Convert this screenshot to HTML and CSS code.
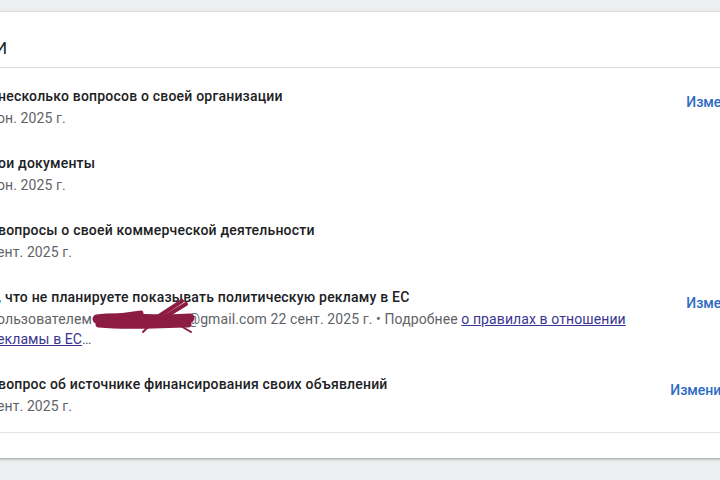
FILE: index.html
```html
<!DOCTYPE html>
<html lang="ru">
<head>
    <meta charset="UTF-8">
    <meta name="viewport" content="width=device-width, initial-scale=1.0">
    <title>Проверки</title>
    <link rel="stylesheet" href="styles.css">
</head>
<body>
    <div class="page">
        <div class="card">
            <div class="card-header"><span class="header-text">И</span></div>

            <div class="list">
                <div class="row">
                    <div class="info">
                        <div class="title">несколько вопросов о своей организации</div>
                        <div class="sub">он. 2025 г.</div>
                    </div>
                    <a href="#" class="action">Изменить</a>
                </div>

                <div class="row">
                    <div class="info">
                        <div class="title">ои документы</div>
                        <div class="sub">он. 2025 г.</div>
                    </div>
                </div>

                <div class="row">
                    <div class="info">
                        <div class="title">вопросы о своей коммерческой деятельности</div>
                        <div class="sub">ент. 2025 г.</div>
                    </div>
                </div>

                <div class="row">
                    <div class="info">
                        <div class="title">, что не планируете показывать политическую рекламу в ЕС</div>
                        <div class="sub">ользователем <span class="redact"><svg class="scribble" viewBox="0 0 104 44" width="104" height="44">
                            <path d="M6 21 C30 17, 60 23, 99 20" stroke-width="9"/>
                            <path d="M8 26 C40 29, 70 26, 97 26" stroke-width="7"/>
                            <path d="M28 18 L50 15" stroke-width="5"/>
                            <path d="M62 22 L91 3" stroke-width="4"/>
                            <path d="M72 20 L95 6" stroke-width="4"/>
                            <path d="M58 28 L52 34" stroke-width="2"/>
                            <path d="M88 27 L100 34" stroke-width="2"/>
                        </svg></span>@gmail.com 22 сент. 2025 г. • Подробнее <a href="#" class="more">о правилах в отношении<br>екламы в ЕС</a>…</div>
                    </div>
                    <a href="#" class="action">Изменить</a>
                </div>

                <div class="row">
                    <div class="info">
                        <div class="title">вопрос об источнике финансирования своих объявлений</div>
                        <div class="sub">ент. 2025 г.</div>
                    </div>
                    <a href="#" class="action action-wide">Изменить</a>
                </div>
            </div>

            <div class="card-footer"></div>
        </div>
    </div>
</body>
</html>
```

FILE: styles.css
```css
body {
    margin: 0;
    background-color: #eeeff1;
    font-family: Roboto, "Noto Sans", sans-serif;
    color: #202124;
    overflow: hidden;
}
.page {
    padding-top: 12px;
    height: 480px;
    box-sizing: border-box;
}
.card {
    width: 796px;
    margin-left: -20px;
    background-color: white;
    box-shadow: 0 1px 2px rgba(60, 64, 67, 0.3), 0 1px 3px 1px rgba(60, 64, 67, 0.15);
}
.card-header {
    padding: 24px 0 7px 20px;
    line-height: 24px;
    font-size: 17px;
    border-bottom: 1px solid #dadce0;
}
.header-text {
    margin-left: -5px;
}
.list {
    padding: 5px 0 4px;
    border-bottom: 1px solid #e3e4e6;
}
.row {
    display: flex;
    justify-content: space-between;
    align-items: flex-start;
    padding: 12px 24px 12px 20px;
}
.title {
    font-size: 14px;
    font-weight: 500;
    line-height: 22px;
    letter-spacing: 0.2px;
    margin-left: -2px;
}
.sub {
    font-size: 14px;
    line-height: 20px;
    letter-spacing: 0.1px;
    color: #5f6368;
    margin-top: 1px;
    margin-left: -3px;
}
.redact {
    display: inline-block;
    position: relative;
    width: 92px;
    height: 14px;
    vertical-align: -2px;
}
.scribble {
    position: absolute;
    left: -4px;
    top: -14px;
    fill: none;
    stroke: #8c1c42;
    stroke-linecap: round;
}
.more {
    color: #3a3591;
    text-decoration: underline;
}
.action {
    margin-top: 7px;
    font-size: 14px;
    font-weight: 500;
    line-height: 20px;
    color: #2d6bc4;
    text-decoration: none;
}
.action-wide {
    margin-right: 16px;
}
.card-footer {
    height: 25px;
}
```
